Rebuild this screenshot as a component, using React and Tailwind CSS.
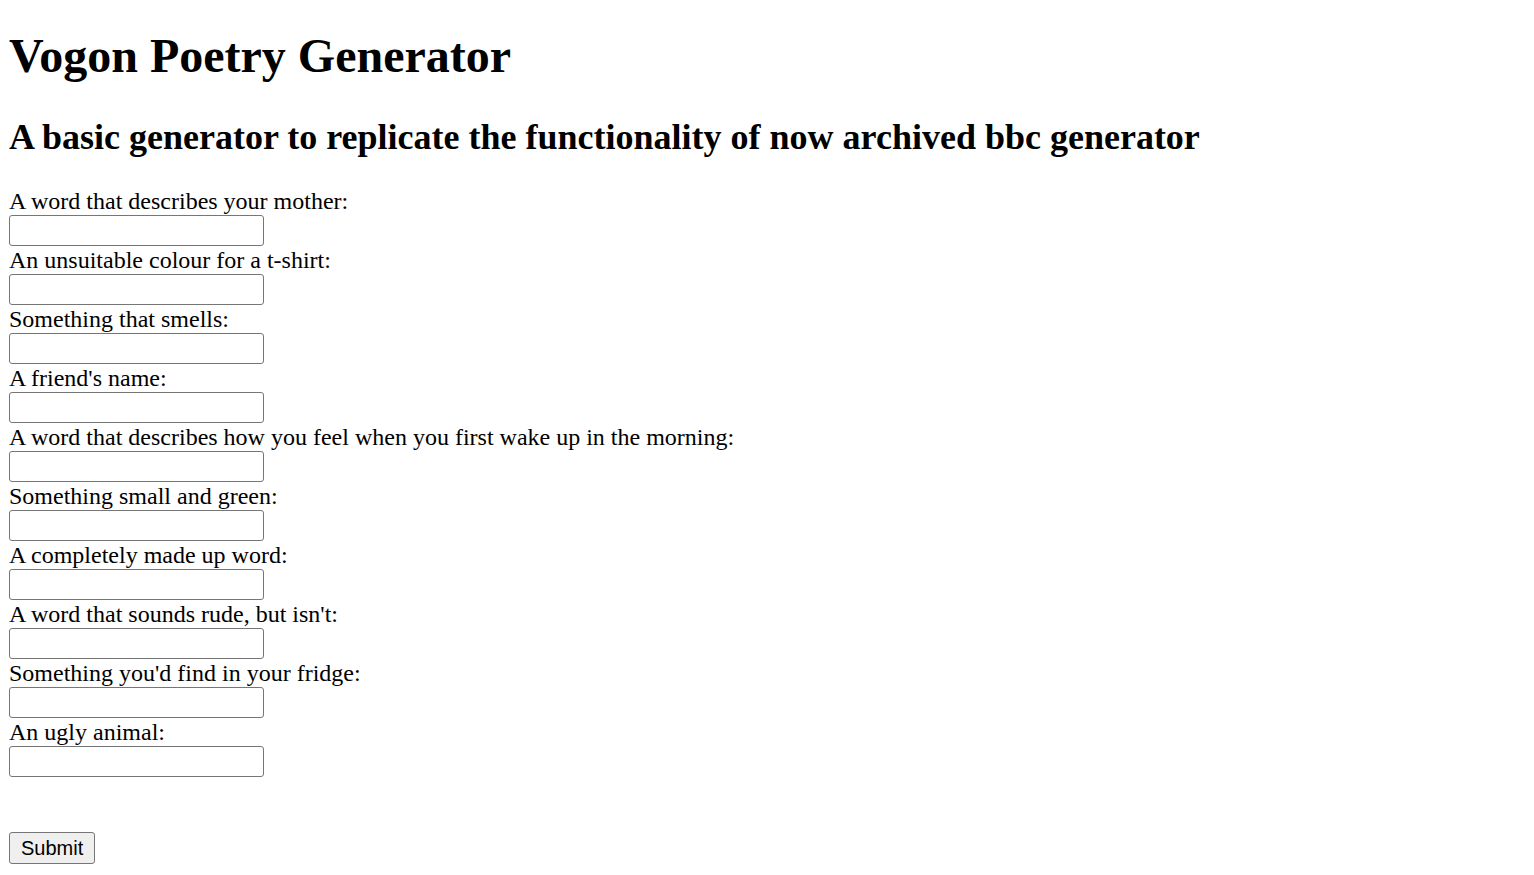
import React from 'react';

const fields = [
  "A word that describes your mother:",
  "An unsuitable colour for a t-shirt:",
  "Something that smells:",
  "A friend's name:",
  "A word that describes how you feel when you first wake up in the morning:",
  "Something small and green:",
  "A completely made up word:",
  "A word that sounds rude, but isn't:",
  "Something you'd find in your fridge:",
  "An ugly animal:",
];

const App = () => {
  return (
    <div className="min-h-screen bg-white px-[9px] pt-[28px] text-black font-['Liberation_Serif',serif]">
      <h1 className="text-[48px] font-bold leading-[55px]">Vogon Poetry Generator</h1>
      <h2 className="mt-[34px] text-[36px] font-bold leading-[41px]">
        A basic generator to replicate the functionality of now archived bbc generator
      </h2>
      <form className="mt-[29px] flex flex-col items-start" onSubmit={(e) => e.preventDefault()}>
        {fields.map((label) => (
          <div key={label} className="flex flex-col items-start">
            <label className="text-[24px] leading-[28px]">{label}</label>
            <input
              type="text"
              className="h-[31px] w-[255px] rounded-[3px] border border-[#767676] bg-white px-1 text-[20px]"
            />
          </div>
        ))}
        <button
          type="submit"
          className="mt-[55px] h-[32px] rounded-[3px] border border-[#767676] bg-[#efefef] px-[11px] text-[20px] font-['Liberation_Sans',Arial,sans-serif] text-black"
        >
          Submit
        </button>
      </form>
    </div>
  );
};

export default App;
